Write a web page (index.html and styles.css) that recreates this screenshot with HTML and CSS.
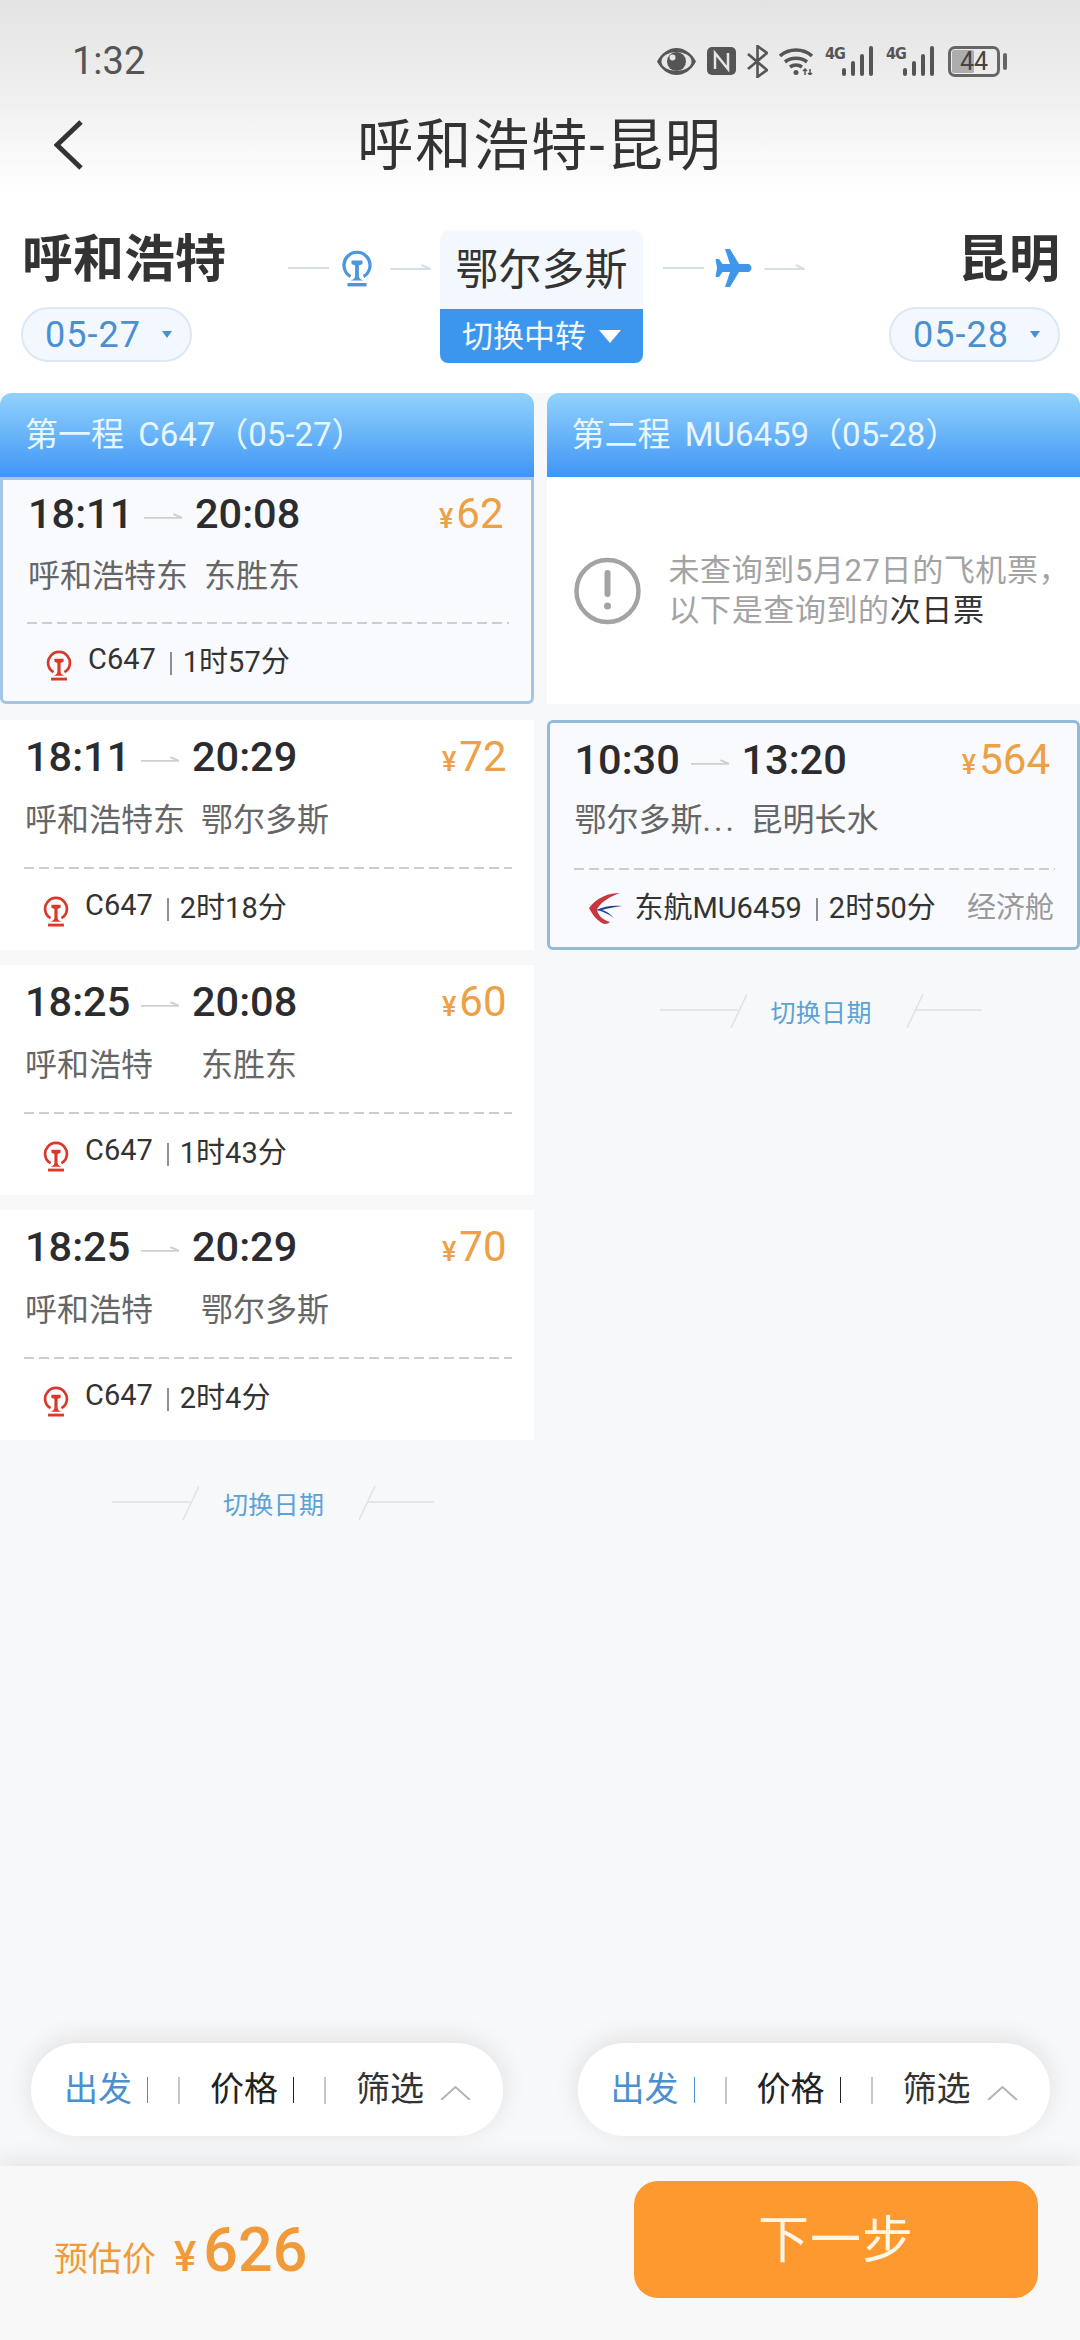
FILE: index.html
```html
<!DOCTYPE html>
<html lang="zh-CN">
<head>
    <meta charset="UTF-8">
    <meta name="viewport" content="width=device-width, initial-scale=1.0">
    <title>呼和浩特-昆明</title>
    <link rel="stylesheet" href="styles.css">
</head>
<body>
    <svg class="sprites" aria-hidden="true">
        <symbol id="rail" viewBox="0 0 30 37">
            <path d="M8.5 26.5A13 13 0 1 1 21.5 26.5" fill="none" stroke="currentColor" stroke-width="3.2"/>
            <path d="M9.5 10.5h11v3.6l-3.6 1.4V26c0 2.2 1.6 3.6 4.4 4.6H8.700c2.800-1 4.400-2.400 4.400-4.600V15.500l-3.600-1.400z" fill="currentColor"/>
            <rect x="5.500" y="33" width="19" height="3.400" fill="currentColor"/>
        </symbol>
        <symbol id="arrow" viewBox="0 0 40 10">
            <path d="M0 7H40L31 3" fill="none" stroke="currentColor" stroke-width="2"/>
        </symbol>
        <symbol id="slash-left" viewBox="0 0 87 36">
            <path d="M0 17H78M71 35L87 1" fill="none" stroke="currentColor" stroke-width="1.500"/>
        </symbol>
        <symbol id="slash-right" viewBox="0 0 75 36">
            <path d="M8 17H75M0 35L16 1" fill="none" stroke="currentColor" stroke-width="1.500"/>
        </symbol>
        <symbol id="bars" viewBox="0 0 32 30">
            <rect x="0" y="22" width="4" height="8" rx="2"/>
            <rect x="9" y="15" width="4" height="15" rx="2"/>
            <rect x="18" y="8" width="4" height="22" rx="2"/>
            <rect x="27" y="0" width="4" height="30" rx="2"/>
        </symbol>
        <symbol id="chevron" viewBox="0 0 31 14">
            <path d="M1 14L15.500 1L30 14" fill="none" stroke="currentColor" stroke-width="2"/>
        </symbol>
    </svg>

    <div class="page">
        <header class="top">
            <div class="status">
                <span class="clock">1:32</span>
                <div class="status-icons">
                    <svg class="ic-eye" viewBox="0 0 39 27"><path d="M0 13.500C5 4.500 12 0 19.500 0S34 4.500 39 13.500C34 22.500 27 27 19.500 27S5 22.500 0 13.500z" fill="#555"/><ellipse cx="19.500" cy="13.500" rx="15" ry="9.500" fill="#e6e6e6"/><circle cx="19.500" cy="13.500" r="9.500" fill="#555"/><circle cx="15.500" cy="9.500" r="3" fill="#e6e6e6"/></svg>
                    <svg class="ic-nfc" viewBox="0 0 29 28"><rect width="29" height="28" rx="5" fill="#555"/><path d="M8 22V6L21 22V6" fill="none" stroke="#e6e6e6" stroke-width="2.500"/></svg>
                    <svg class="ic-bt" viewBox="0 0 21 33"><path d="M1 9L20 25L10.500 32V1L20 8L1 24" fill="none" stroke="#555" stroke-width="2.600"/></svg>
                    <svg class="ic-wifi" viewBox="0 0 36 28"><path d="M1 9C10 1 24 1 33 9M6 15C12 10 22 10 28 15M11 20C14.500 17.500 19.500 17.500 23 20" fill="none" stroke="#555" stroke-width="3.600"/><circle cx="17" cy="25.500" r="2.500" fill="#555"/><path d="M26 28V22M31 28V22M28 24L26 22L24 24M29 26L31 28L33 26" fill="none" stroke="#555" stroke-width="1.500"/></svg>
                    <div class="signal"><span class="net">4G</span><svg class="ic-bars"><use href="#bars"/></svg></div>
                    <div class="signal"><span class="net">4G</span><svg class="ic-bars"><use href="#bars"/></svg></div>
                    <div class="battery">
                        <div class="battery-body"><div class="battery-fill"></div><span class="battery-num">44</span></div>
                        <div class="battery-nub"></div>
                    </div>
                </div>
            </div>
            <nav class="nav">
                <svg class="back" viewBox="0 0 29 50"><path d="M27 2L3 25L27 48" fill="none" stroke="#333" stroke-width="5"/></svg>
                <h1 class="title">呼和浩特-昆明</h1>
            </nav>
            <section class="route">
                <div class="route-end">
                    <div class="city">呼和浩特</div>
                    <div class="date-pill">05-27<i class="caret"></i></div>
                </div>
                <div class="connector connector-rail">
                    <i class="conn-line"></i>
                    <svg class="conn-rail"><use href="#rail"/></svg>
                    <svg class="conn-arrow"><use href="#arrow"/></svg>
                </div>
                <div class="transfer">
                    <div class="transfer-city">鄂尔多斯</div>
                    <div class="transfer-btn">切换中转<i class="transfer-caret"></i></div>
                </div>
                <div class="connector connector-plane">
                    <i class="conn-line"></i>
                    <svg class="conn-plane" viewBox="0 0 37 38"><path d="M10 0h5l9 15h9c2 0 3.500 1.800 3.500 4s-1.500 4-3.500 4h-9l-9 15h-5l5-15H7.500L4 28H.5L2 19 .5 10H4l3.500 5H15z" fill="#3f96ea"/></svg>
                    <svg class="conn-arrow"><use href="#arrow"/></svg>
                </div>
                <div class="route-end route-end-right">
                    <div class="city">昆明</div>
                    <div class="date-pill">05-28<i class="caret"></i></div>
                </div>
            </section>
        </header>

        <main class="columns">
            <div class="column">
                <div class="col-head">第一程 C647（05-27）</div>
                <article class="ticket ticket-active ticket-first">
                    <div class="times"><span class="dep">18:11</span><svg class="time-arrow"><use href="#arrow"/></svg><span class="arr">20:08</span><span class="price"><small>¥</small>62</span></div>
                    <div class="stations"><span class="from">呼和浩特东</span><span>东胜东</span></div>
                    <div class="dash"></div>
                    <div class="meta"><svg class="rail-logo"><use href="#rail"/></svg><span class="code">C647</span><i class="sep"></i><span>1时57分</span></div>
                </article>
                <div class="ticket-list">
                    <article class="ticket">
                        <div class="times"><span class="dep">18:11</span><svg class="time-arrow"><use href="#arrow"/></svg><span class="arr">20:29</span><span class="price"><small>¥</small>72</span></div>
                        <div class="stations"><span class="from">呼和浩特东</span><span>鄂尔多斯</span></div>
                        <div class="dash"></div>
                        <div class="meta"><svg class="rail-logo"><use href="#rail"/></svg><span class="code">C647</span><i class="sep"></i><span>2时18分</span></div>
                    </article>
                    <article class="ticket">
                        <div class="times"><span class="dep">18:25</span><svg class="time-arrow"><use href="#arrow"/></svg><span class="arr">20:08</span><span class="price"><small>¥</small>60</span></div>
                        <div class="stations"><span class="from">呼和浩特</span><span>东胜东</span></div>
                        <div class="dash"></div>
                        <div class="meta"><svg class="rail-logo"><use href="#rail"/></svg><span class="code">C647</span><i class="sep"></i><span>1时43分</span></div>
                    </article>
                    <article class="ticket">
                        <div class="times"><span class="dep">18:25</span><svg class="time-arrow"><use href="#arrow"/></svg><span class="arr">20:29</span><span class="price"><small>¥</small>70</span></div>
                        <div class="stations"><span class="from">呼和浩特</span><span>鄂尔多斯</span></div>
                        <div class="dash"></div>
                        <div class="meta"><svg class="rail-logo"><use href="#rail"/></svg><span class="code">C647</span><i class="sep"></i><span>2时4分</span></div>
                    </article>
                </div>
                <div class="switch-date">
                    <svg class="slash-l"><use href="#slash-left"/></svg>
                    <span>切换日期</span>
                    <svg class="slash-r"><use href="#slash-right"/></svg>
                </div>
                <div class="sort-bar">
                    <span class="sort-item sort-on">出发<i class="tick"></i></span><i class="sort-sep"></i>
                    <span class="sort-item">价格<i class="tick"></i></span><i class="sort-sep"></i>
                    <span class="sort-item sort-filter">筛选</span>
                    <svg class="sort-chevron"><use href="#chevron"/></svg>
                </div>
            </div>

            <div class="column">
                <div class="col-head">第二程 MU6459（05-28）</div>
                <div class="notice">
                    <svg class="notice-icon" viewBox="0 0 67 68"><circle cx="33.500" cy="34" r="31" fill="none" stroke="#a3a3a3" stroke-width="4.500"/><path d="M33.500 16V37" stroke="#a3a3a3" stroke-width="6" stroke-linecap="round"/><circle cx="33.500" cy="49" r="3.500" fill="#a3a3a3"/></svg>
                    <p class="notice-text">未查询到5月27日的飞机票，<br>以下是查询到的<b>次日票</b></p>
                </div>
                <article class="ticket ticket-active ticket-flight">
                    <div class="times"><span class="dep">10:30</span><svg class="time-arrow"><use href="#arrow"/></svg><span class="arr">13:20</span><span class="price"><small>¥</small>564</span></div>
                    <div class="stations"><span class="from">鄂尔多斯<span class="dots">...</span></span><span>昆明长水</span></div>
                    <div class="dash"></div>
                    <div class="meta">
                        <svg class="airline-logo" viewBox="0 0 33 31"><path d="M31 0C20 0 8 4 0 15C3 21 8 28 15 31C18 31 20 30 21 29C13 27 8 21 8 16C13 8 22 3 31 0Z" fill="#c8373f"/><path d="M33 13C25 12 15 13 7 17C13 18 20 21 25 25C20 20 17 18 13 17C19 15 26 14 33 13Z" fill="#1f3f8f"/></svg>
                        <span class="carrier">东航MU6459</span><i class="sep"></i><span>2时50分</span><span class="cabin">经济舱</span>
                    </div>
                </article>
                <div class="switch-date switch-date-right">
                    <svg class="slash-l"><use href="#slash-left"/></svg>
                    <span>切换日期</span>
                    <svg class="slash-r"><use href="#slash-right"/></svg>
                </div>
                <div class="sort-bar">
                    <span class="sort-item sort-on">出发<i class="tick"></i></span><i class="sort-sep"></i>
                    <span class="sort-item">价格<i class="tick"></i></span><i class="sort-sep"></i>
                    <span class="sort-item sort-filter">筛选</span>
                    <svg class="sort-chevron"><use href="#chevron"/></svg>
                </div>
            </div>
        </main>

        <footer class="footer">
            <div class="estimate"><span class="estimate-label">预估价</span><span class="estimate-yen">¥</span><span class="estimate-num">626</span></div>
            <button class="next" type="button">下一步</button>
        </footer>
    </div>
</body>
</html>
```

FILE: styles.css
```css
* {
    box-sizing: border-box;
}
body {
    margin: 0;
    background-color: #f7f8f9;
    color: #333;
    font-family: Roboto, "Noto Sans CJK SC", sans-serif;
}
i {
    font-style: normal;
}
.sprites {
    position: absolute;
    width: 0;
    height: 0;
}
.page {
    width: 1080px;
    height: 2340px;
    display: flex;
    flex-direction: column;
    overflow: hidden;
}

/* top area */
.top {
    height: 393px;
    padding-top: 40px;
    background: linear-gradient(#e3e3e3 0, #f0f0f0 100px, #ffffff 195px);
}
.status {
    height: 42px;
    display: flex;
    align-items: center;
    padding: 0 73px 0 72px;
    color: #555;
}
.clock {
    font-size: 38px;
}
.status-icons {
    margin-left: auto;
    display: flex;
    align-items: center;
}
.ic-eye {
    width: 39px;
    height: 27px;
}
.ic-nfc {
    width: 29px;
    height: 28px;
    margin-left: 11px;
}
.ic-bt {
    width: 21px;
    height: 33px;
    margin-left: 11px;
}
.ic-wifi {
    width: 36px;
    height: 28px;
    margin-left: 11px;
}
.signal {
    display: flex;
    width: 49px;
    height: 30px;
    margin-left: 10px;
    fill: #555;
}
.signal + .signal {
    margin-left: 12px;
}
.net {
    width: 17px;
    font-family: "DejaVu Sans Condensed", "DejaVu Sans", sans-serif;
    font-weight: 700;
    font-size: 16px;
    line-height: 16px;
    letter-spacing: -1px;
}
.ic-bars {
    width: 32px;
    height: 30px;
}
.battery {
    display: flex;
    align-items: center;
    margin-left: 13px;
}
.battery-body {
    position: relative;
    width: 52px;
    height: 31px;
    border: 3px solid #666;
    border-radius: 7px;
    display: flex;
    align-items: center;
    justify-content: center;
}
.battery-fill {
    position: absolute;
    left: 1px;
    top: 1px;
    bottom: 1px;
    width: 22px;
    background: #adadad;
    border-radius: 2px;
}
.battery-num {
    position: relative;
    font-size: 25px;
    line-height: 25px;
    color: #444;
}
.battery-nub {
    width: 4px;
    height: 17px;
    margin-left: 3px;
    background: #666;
    border-radius: 2px;
}
.nav {
    position: relative;
    height: 58px;
    margin-top: 34px;
    display: flex;
    justify-content: center;
    align-items: center;
}
.back {
    position: absolute;
    left: 54px;
    top: 4px;
    width: 29px;
    height: 50px;
}
.title {
    margin: 0;
    padding-top: 2px;
    font-size: 56px;
    font-weight: 400;
    letter-spacing: 2px;
    line-height: 58px;
    color: #333;
}

/* route row */
.route {
    display: flex;
    align-items: flex-start;
    margin-top: 56px;
    padding: 0 20px 0 21px;
}
.route-end {
    width: 205px;
}
.route-end-right {
    width: 171px;
    margin-left: auto;
    display: flex;
    flex-direction: column;
    align-items: flex-end;
}
.city {
    height: 50px;
    margin-top: 5px;
    padding-left: 1px;
    font-size: 51px;
    font-weight: 700;
    line-height: 50px;
    color: #333;
}
.date-pill {
    display: flex;
    align-items: center;
    width: 171px;
    height: 55px;
    margin-top: 22px;
    padding-left: 22px;
    font-size: 36px;
    letter-spacing: 1px;
    color: #4a90d0;
    background: #f2f8fe;
    border: 2px solid #dbe8f5;
    border-radius: 28px;
}
.caret {
    margin-left: 21px;
    border-top: 7px solid #4a90d0;
    border-left: 5px solid transparent;
    border-right: 5px solid transparent;
}
.connector {
    display: flex;
    align-items: center;
    height: 38px;
    margin-top: 19px;
    color: #d6dee6;
}
.connector-rail {
    margin-left: 62px;
}
.connector-plane {
    margin-left: 20px;
}
.conn-line {
    width: 41px;
    height: 2px;
    background: #d6dee6;
}
.conn-rail {
    width: 30px;
    height: 37px;
    margin: 0 18px 0 13px;
    color: #4a96e0;
}
.conn-plane {
    width: 37px;
    height: 38px;
    margin: 0 12px 0 11px;
}
.conn-arrow {
    width: 41px;
    height: 10px;
    margin-bottom: 3px;
}
.transfer {
    width: 203px;
    height: 133px;
    margin-left: 9px;
    background: #f3f8fe;
    border-radius: 10px 10px 8px 8px;
    overflow: hidden;
}
.transfer-city {
    height: 79px;
    padding-top: 4px;
    font-size: 43px;
    line-height: 72px;
    text-align: center;
    color: #333;
}
.transfer-btn {
    display: flex;
    align-items: center;
    height: 54px;
    padding: 0 0 5px 22px;
    font-size: 31px;
    color: #f0f7ff;
    background: #3d96ee;
}
.transfer-caret {
    margin: 5px 0 0 13px;
    border-top: 13px solid #fff;
    border-left: 11px solid transparent;
    border-right: 11px solid transparent;
}

/* two columns */
.columns {
    flex: 1;
    display: flex;
    gap: 13px;
    padding-bottom: 30px;
}
.column {
    flex: 1;
    display: flex;
    flex-direction: column;
    min-width: 0;
}
.col-head {
    height: 84px;
    padding-left: 25px;
    font-size: 33px;
    line-height: 83px;
    word-spacing: 6px;
    color: #e8f6ff;
    background: linear-gradient(#92d2fc, #3f95f6);
    border-radius: 12px 12px 0 0;
}
.ticket-list {
    display: flex;
    flex-direction: column;
    gap: 15px;
    margin-top: 16px;
}
.ticket {
    height: 230px;
    padding: 11px 22px 0 24px;
    background: #fff;
}
.ticket-active {
    background: #f8fafe;
    border: 3px solid #a3c6e6;
}
.ticket-first {
    height: 227px;
    padding-top: 8px;
    border-radius: 0 0 6px 6px;
}
.ticket-flight {
    margin-top: 16px;
    padding-top: 11px;
    border-color: #93bbd9;
    border-radius: 6px;
}
.times {
    display: flex;
    align-items: center;
    height: 50px;
    font-size: 41.5px;
    font-weight: 500;
    color: #2c2c2e;
}
.dep {
    width: 117px;
    padding-left: 1px;
    white-space: nowrap;
}
.time-arrow {
    width: 38px;
    height: 10px;
    margin-top: 5px;
    color: #cfcfcf;
}
.arr {
    margin-left: 13px;
}
.price {
    margin-left: auto;
    padding-right: 5px;
    font-weight: 400;
    font-size: 42px;
    color: #eda044;
}
.price small {
    margin-right: 3px;
    font-size: 27px;
    font-weight: 500;
}
.stations {
    display: flex;
    height: 44px;
    margin-top: 17px;
    font-size: 32px;
    line-height: 44px;
    color: #666;
}
.from {
    width: 177px;
    padding-left: 1px;
    white-space: nowrap;
}
.ticket-first .stations {
    margin-top: 16px;
}
.ticket-flight .stations {
    margin-top: 14px;
}
.dots {
    letter-spacing: 3px;
}
.dash {
    height: 2px;
    margin-top: 25px;
    background: repeating-linear-gradient(90deg, #cdcdcd 0, #cdcdcd 10px, transparent 10px, transparent 15px);
}
.ticket-first .dash {
    margin-top: 24px;
}
.ticket-flight .dash {
    margin-top: 26px;
}
.meta {
    display: flex;
    align-items: center;
    height: 40px;
    margin-top: 16px;
    padding-left: 19px;
    font-size: 29px;
    color: #333;
}
.ticket-first .meta,
.ticket-flight .meta {
    margin-top: 15px;
}
.ticket-flight .meta {
    padding-left: 15px;
}
.rail-logo {
    width: 26px;
    height: 31px;
    margin-top: 12px;
    color: #d8392b;
}
.airline-logo {
    width: 33px;
    height: 31px;
    margin-top: 6px;
}
.code {
    margin-left: 16px;
}
.carrier {
    margin-left: 13px;
}
.sep {
    width: 2px;
    height: 23px;
    margin: 8px 11px 0 14px;
    background: #8f8f8f;
}
.cabin {
    margin-left: auto;
    padding-right: 1px;
    color: #999;
}

/* notice, second leg */
.notice {
    display: flex;
    align-items: center;
    height: 227px;
    padding-left: 27px;
    background: #fff;
}
.notice-icon {
    width: 67px;
    height: 68px;
    flex: none;
}
.notice-text {
    margin: 0 0 0 28px;
    font-size: 31px;
    line-height: 40px;
    letter-spacing: 0.6px;
    color: #a3a3a3;
    white-space: nowrap;
}
.notice-text b {
    font-weight: 400;
    color: #333;
}

/* switch date */
.switch-date {
    display: flex;
    align-items: center;
    height: 36px;
    margin-top: 45px;
    padding-left: 112px;
    font-size: 25px;
    letter-spacing: 0.3px;
    color: #5ba3d6;
}
.switch-date-right {
    margin-top: 43px;
    padding-left: 113px;
}
.slash-l {
    width: 87px;
    height: 36px;
    margin-right: 24px;
    color: #dfe2e6;
}
.slash-r {
    width: 75px;
    height: 36px;
    margin-left: 35px;
    color: #dfe2e6;
}

/* sort pill */
.sort-bar {
    display: flex;
    align-items: center;
    width: 472px;
    height: 93px;
    margin: auto 0 0 31px;
    padding: 0 0 7px 33px;
    font-size: 34px;
    color: #222;
    background: #fff;
    border-radius: 46px;
    box-shadow: 0 -4px 26px rgba(0, 0, 0, 0.1);
}
.sort-item {
    display: flex;
    align-items: center;
    white-space: nowrap;
}
.sort-on {
    color: #4a90d0;
}
.tick {
    width: 1px;
    height: 26px;
    margin: 8px 0 0 15px;
    background: currentColor;
}
.sort-sep {
    width: 2px;
    height: 27px;
    margin: 8px 30px 0 30px;
    background: #c6c6c6;
}
.sort-filter {
    color: #333;
}
.sort-chevron {
    width: 31px;
    height: 14px;
    margin: 14px 0 0 16px;
    color: #b4b4b4;
}

/* footer */
.footer {
    position: relative;
    display: flex;
    height: 174px;
    padding: 15px 42px 0 54px;
    background: #f8f8f8;
    box-shadow: 0 -8px 20px rgba(0, 0, 0, 0.07);
}
.estimate {
    display: flex;
    align-items: baseline;
    height: 112px;
    padding-top: 33px;
    color: #f09a3a;
}
.estimate-label {
    font-size: 34px;
}
.estimate-yen {
    margin-left: 18px;
    font-size: 42px;
    font-weight: 500;
}
.estimate-num {
    margin-left: 7px;
    font-size: 61px;
    font-weight: 500;
}
.next {
    width: 404px;
    height: 117px;
    margin-left: auto;
    padding: 0 0 8px;
    font-family: inherit;
    font-size: 51px;
    letter-spacing: 1px;
    color: #fff6e8;
    background: #fd992e;
    border: none;
    border-radius: 24px;
}
```
